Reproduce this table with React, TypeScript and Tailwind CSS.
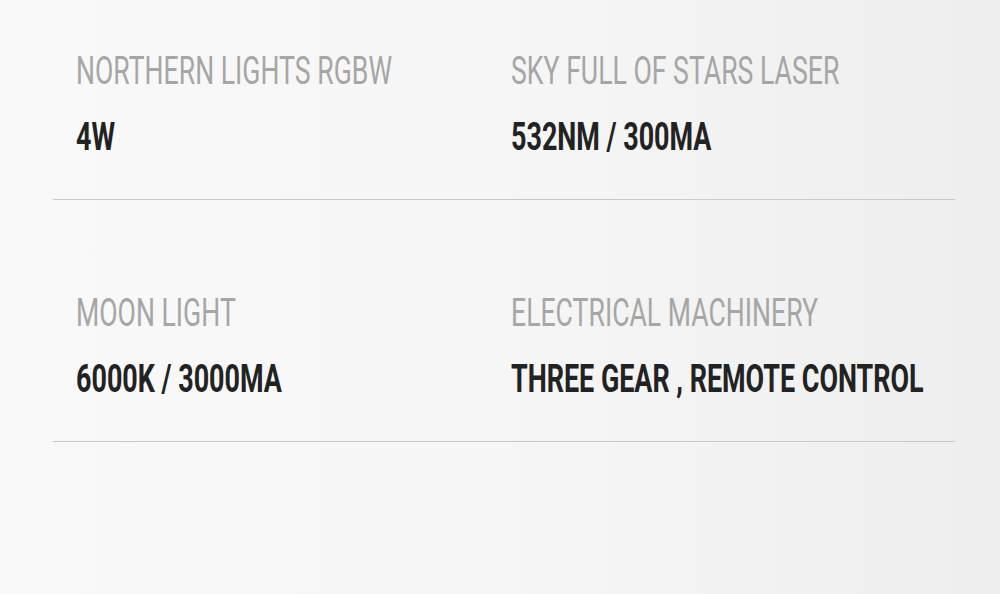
const specs = [
  [
    { label: 'NORTHERN LIGHTS RGBW', value: '4W' },
    { label: 'SKY FULL OF STARS LASER', value: '532NM / 300MA' },
  ],
  [
    { label: 'MOON LIGHT', value: '6000K / 3000MA' },
    { label: 'ELECTRICAL MACHINERY', value: 'THREE GEAR , REMOTE CONTROL' },
  ],
]

export default function App() {
  return (
    <div
      className="min-h-[594px] w-full overflow-hidden bg-gradient-to-r from-[#f9f9f9] via-[#f6f6f6] to-[#eeeeee] pt-[51px]"
      style={{ fontFamily: 'Roboto, "Liberation Sans", sans-serif' }}
    >
      <div className="mx-[45px] flex flex-col gap-[93px] pl-[8px]">
        {specs.map((row, i) => (
          <div key={i} className="grid grid-cols-[435px_1fr] border-b border-[#c9c9c9] pb-[42px] pl-[23px]">
            {row.map((item) => (
              <div key={item.label} className="flex min-w-0 flex-col gap-[26px] whitespace-nowrap">
                <div className="text-[39px] leading-[40px] font-normal text-[#a6a6a6]">
                  <span className="inline-block origin-left scale-x-[0.683]">{item.label}</span>
                </div>
                <div className="text-[39px] leading-[40px] font-bold text-[#222222]">
                  <span className="inline-block origin-left scale-x-[0.69]">{item.value}</span>
                </div>
              </div>
            ))}
          </div>
        ))}
      </div>
    </div>
  )
}
